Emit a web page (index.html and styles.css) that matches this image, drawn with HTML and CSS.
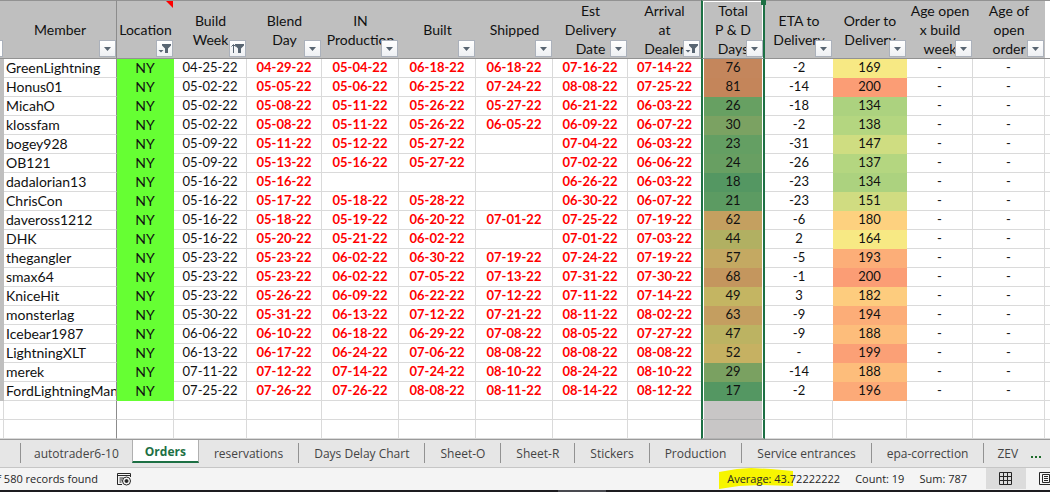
FILE: index.html
```html
<!DOCTYPE html>
<html lang="en">
<head>
<meta charset="utf-8">
<title>Orders</title>
<link rel="stylesheet" href="styles.css">
</head>
<body>
<svg class="defs" aria-hidden="true">
  <symbol id="drop" viewBox="0 0 15 15"><path d="M4 6h7L7.500 10z" fill="#586572"/></symbol>
  <symbol id="funnel" viewBox="0 0 15 15"><path d="M5 3h9v1.500l-3 3V12H8V7.500l-3-3z" fill="#586572"/><path d="M1.500 9h5L4 11.500z" fill="#586572"/></symbol>
  <symbol id="sorted" viewBox="0 0 15 15"><path d="M5 3h9v1.500l-3 3V12H8V7.500l-3-3z" fill="#586572"/><path d="M3.500 12V4M1.500 5.500l2-2 2 2" fill="none" stroke="#586572"/></symbol>
</svg>
<main class="sheet">
<table class="orders">
<colgroup><col class="c-edge"><col class="c-member"><col class="c-location"><col class="c-week"><col class="c-blend"><col class="c-stage"><col class="c-stage"><col class="c-stage"><col class="c-blend"><col class="c-arrival"><col class="c-total"><col class="c-eta"><col class="c-order"><col class="c-open"><col class="c-age"><col></colgroup>
<thead>
<tr>
<th><span class="cut-button"></span></th>
<th>Member<button class="filter" aria-label="Filter Member"><svg><use href="#drop"/></svg></button></th>
<th>Location<span class="note"></span><button class="filter" aria-label="Filter Location"><svg><use href="#funnel"/></svg></button></th>
<th>Build<br>Week<button class="filter" aria-label="Filter Build Week"><svg><use href="#sorted"/></svg></button></th>
<th>Blend<br>Day<button class="filter" aria-label="Filter Blend Day"><svg><use href="#drop"/></svg></button></th>
<th>IN<br>Production<button class="filter" aria-label="Filter IN Production"><svg><use href="#drop"/></svg></button></th>
<th>Built<button class="filter" aria-label="Filter Built"><svg><use href="#drop"/></svg></button></th>
<th>Shipped<button class="filter" aria-label="Filter Shipped"><svg><use href="#drop"/></svg></button></th>
<th>Est<br>Delivery<br>Date<button class="filter" aria-label="Filter Est Delivery Date"><svg><use href="#drop"/></svg></button></th>
<th>Arrival<br>at<br>Dealer<button class="filter" aria-label="Filter Arrival at Dealer"><svg><use href="#funnel"/></svg></button></th>
<th>Total<br>P &amp; D<br>Days<span class="handle"></span><button class="filter" aria-label="Filter Total P and D Days"><svg><use href="#drop"/></svg></button></th>
<th>ETA to<br>Delivery<button class="filter" aria-label="Filter ETA to Delivery"><svg><use href="#drop"/></svg></button></th>
<th>Order to<br>Delivery<button class="filter" aria-label="Filter Order to Delivery"><svg><use href="#drop"/></svg></button></th>
<th>Age open<br>x build<br>week<button class="filter" aria-label="Filter Age open x build week"><svg><use href="#drop"/></svg></button></th>
<th>Age of<br>open<br>order<button class="filter" aria-label="Filter Age of open order"><svg><use href="#drop"/></svg></button></th>
<th></th>
</tr>
</thead>
<tbody class="records">
<tr><td></td><td>GreenLightning</td><td>NY</td><td>04-25-22</td><td>04-29-22</td><td>05-04-22</td><td>06-18-22</td><td>06-18-22</td><td>07-16-22</td><td>07-14-22</td><td style="background:#c4865c">76</td><td>-2</td><td style="background:#f7e984">169</td><td>-</td><td>-</td><td></td></tr>
<tr><td></td><td>Honus01</td><td>NY</td><td>05-02-22</td><td>05-05-22</td><td>05-06-22</td><td>06-25-22</td><td>07-24-22</td><td>08-08-22</td><td>07-25-22</td><td style="background:#c4855a">81</td><td>-14</td><td style="background:#fb9d75">200</td><td>-</td><td>-</td><td></td></tr>
<tr><td></td><td>MicahO</td><td>NY</td><td>05-02-22</td><td>05-08-22</td><td>05-11-22</td><td>05-26-22</td><td>05-27-22</td><td>06-21-22</td><td>06-03-22</td><td style="background:#67a062">26</td><td>-18</td><td style="background:#acd27f">134</td><td>-</td><td>-</td><td></td></tr>
<tr><td></td><td>klossfam</td><td>NY</td><td>05-02-22</td><td>05-08-22</td><td>05-11-22</td><td>05-26-22</td><td>06-05-22</td><td>06-09-22</td><td>06-07-22</td><td style="background:#7ba262">30</td><td>-2</td><td style="background:#b4d680">138</td><td>-</td><td>-</td><td></td></tr>
<tr><td></td><td>bogey928</td><td>NY</td><td>05-09-22</td><td>05-11-22</td><td>05-12-22</td><td>05-27-22</td><td></td><td>07-04-22</td><td>06-03-22</td><td style="background:#649f63">23</td><td>-31</td><td style="background:#cfdd81">147</td><td>-</td><td>-</td><td></td></tr>
<tr><td></td><td>OB121</td><td>NY</td><td>05-09-22</td><td>05-13-22</td><td>05-16-22</td><td>05-27-22</td><td></td><td>07-02-22</td><td>06-06-22</td><td style="background:#689f62">24</td><td>-26</td><td style="background:#b4d680">137</td><td>-</td><td>-</td><td></td></tr>
<tr><td></td><td>dadalorian13</td><td>NY</td><td>05-16-22</td><td>05-16-22</td><td></td><td></td><td></td><td>06-26-22</td><td>06-03-22</td><td style="background:#549762">18</td><td>-23</td><td style="background:#acd27f">134</td><td>-</td><td>-</td><td></td></tr>
<tr><td></td><td>ChrisCon</td><td>NY</td><td>05-16-22</td><td>05-17-22</td><td>05-18-22</td><td>05-28-22</td><td></td><td>06-30-22</td><td>06-07-22</td><td style="background:#5c9b62">21</td><td>-23</td><td style="background:#d0dc81">151</td><td>-</td><td>-</td><td></td></tr>
<tr><td></td><td>daveross1212</td><td>NY</td><td>05-16-22</td><td>05-18-22</td><td>05-19-22</td><td>06-20-22</td><td>07-01-22</td><td>07-25-22</td><td>07-19-22</td><td style="background:#c4a060">62</td><td>-6</td><td style="background:#fdd17f">180</td><td>-</td><td>-</td><td></td></tr>
<tr><td></td><td>DHK</td><td>NY</td><td>05-16-22</td><td>05-20-22</td><td>05-21-22</td><td>06-02-22</td><td></td><td>07-01-22</td><td>07-03-22</td><td style="background:#b1b062">44</td><td>2</td><td style="background:#f7e984">164</td><td>-</td><td>-</td><td></td></tr>
<tr><td></td><td>thegangler</td><td>NY</td><td>05-23-22</td><td>05-23-22</td><td>06-02-22</td><td>06-30-22</td><td>07-19-22</td><td>07-24-22</td><td>07-19-22</td><td style="background:#c4a962">57</td><td>-5</td><td style="background:#fcae78">193</td><td>-</td><td>-</td><td></td></tr>
<tr><td></td><td>smax64</td><td>NY</td><td>05-23-22</td><td>05-23-22</td><td>06-02-22</td><td>07-05-22</td><td>07-13-22</td><td>07-31-22</td><td>07-30-22</td><td style="background:#c4965e">68</td><td>-1</td><td style="background:#fb9d75">200</td><td>-</td><td>-</td><td></td></tr>
<tr><td></td><td>KniceHit</td><td>NY</td><td>05-23-22</td><td>05-26-22</td><td>06-09-22</td><td>06-22-22</td><td>07-12-22</td><td>07-11-22</td><td>07-14-22</td><td style="background:#c4b562">49</td><td>3</td><td style="background:#fdcc7e">182</td><td>-</td><td>-</td><td></td></tr>
<tr><td></td><td>monsterlag</td><td>NY</td><td>05-30-22</td><td>05-31-22</td><td>06-13-22</td><td>07-12-22</td><td>07-21-22</td><td>08-11-22</td><td>08-02-22</td><td style="background:#c49e60">63</td><td>-9</td><td style="background:#fcad78">194</td><td>-</td><td>-</td><td></td></tr>
<tr><td></td><td>Icebear1987</td><td>NY</td><td>06-06-22</td><td>06-10-22</td><td>06-18-22</td><td>06-29-22</td><td>07-08-22</td><td>08-05-22</td><td>07-27-22</td><td style="background:#bcb362">47</td><td>-9</td><td style="background:#fdbd7b">188</td><td>-</td><td>-</td><td></td></tr>
<tr><td></td><td>LightningXLT</td><td>NY</td><td>06-13-22</td><td>06-17-22</td><td>06-24-22</td><td>07-06-22</td><td>08-08-22</td><td>08-08-22</td><td>08-08-22</td><td style="background:#c6b162">52</td><td>-</td><td style="background:#fba076">199</td><td>-</td><td>-</td><td></td></tr>
<tr><td></td><td>merek</td><td>NY</td><td>07-11-22</td><td>07-12-22</td><td>07-14-22</td><td>07-24-22</td><td>08-10-22</td><td>08-24-22</td><td>08-10-22</td><td style="background:#7aa161">29</td><td>-14</td><td style="background:#fdbd7b">188</td><td>-</td><td>-</td><td></td></tr>
<tr><td></td><td>FordLightningMan</td><td>NY</td><td>07-25-22</td><td>07-26-22</td><td>07-26-22</td><td>08-08-22</td><td>08-11-22</td><td>08-14-22</td><td>08-12-22</td><td style="background:#549762">17</td><td>-2</td><td style="background:#fcaa78">196</td><td>-</td><td>-</td><td></td></tr>
</tbody>
<tbody class="blank">
<tr><td></td><td></td><td></td><td></td><td></td><td></td><td></td><td></td><td></td><td></td><td></td><td></td><td></td><td></td><td></td><td></td></tr>
<tr><td></td><td></td><td></td><td></td><td></td><td></td><td></td><td></td><td></td><td></td><td></td><td></td><td></td><td></td><td></td><td></td></tr>
</tbody>
</table>
</main>
<nav class="tabs" aria-label="Sheets">
<span class="lead"></span>
<button class="tab before-active">autotrader6-10</button>
<button class="tab active">Orders</button>
<button class="tab">reservations</button>
<button class="tab">Days Delay Chart</button>
<button class="tab">Sheet-O</button>
<button class="tab">Sheet-R</button>
<button class="tab">Stickers</button>
<button class="tab">Production</button>
<button class="tab">Service entrances</button>
<button class="tab">epa-correction</button>
<button class="tab last">ZEV</button>
<button class="more" aria-label="More sheets"><i></i><i></i><i></i></button>
</nav>
<footer class="status">
<span class="found">of 580 records found</span>
<button class="macro" aria-label="Record macro"><svg width="15" height="14" viewBox="0 0 15 14" fill="none" stroke="#262626"><path d="M5 12.500H.5V1.500h13V5M.5 3.500h13M2.500 6h4M2.500 8h2.500M2.500 10h2"/><circle cx="9.500" cy="9" r="4"/><circle cx="9.500" cy="9" r="1.500" fill="#262626"/></svg></button>
<span class="average"><svg class="marker" viewBox="0 0 74 22" preserveAspectRatio="none"><path d="M0 5L18 2 32 1 52 2 74 4V19L42 18 20 19 0 22z" fill="#f7f500"/></svg><span class="value">Average: 43.72222222</span></span>
<span class="count">Count: 19</span>
<span class="sum">Sum: 787</span>
<button class="view current" aria-label="Normal view"><svg width="14" height="14" viewBox="0 0 14 14" fill="none" stroke="#262626"><path d="M.5.5h12v12H.5zM4.500.5v12M8.500.5v12M.5 4.500h12M.5 8.500h12"/></svg></button>
<button class="view layout" aria-label="Page layout view"><svg width="14" height="14" viewBox="0 0 14 14" fill="none" stroke="#262626"><path d="M.5.5h13v12H.5zM3.500 2.500h7v8h-7zM5 4.500h4M5 6.500h4M5 8.500h4"/></svg></button>
</footer>
<div class="taskbar"><span class="task"></span></div>
</body>
</html>
```
FILE: styles.css
```css
* { box-sizing: border-box; }
body { margin: 0; overflow: hidden; background: #fff; color: #111; font-family: Lato, "Liberation Sans", sans-serif; font-size: 13px; }
button { margin: 0; padding: 0; border: 0; background: none; color: inherit; font: inherit; }
svg { display: block; }
.defs { position: absolute; width: 0; height: 0; }

.sheet { overflow: hidden; border-bottom: 1px solid #9a9a9a; }
.orders { width: 100%; table-layout: fixed; border-collapse: separate; border-spacing: 0; line-height: 17px; }
.c-edge { width: 4px; }
.c-member { width: 113px; }
.c-location { width: 57px; }
.c-week { width: 73px; }
.c-blend { width: 75px; }
.c-stage { width: 77px; }
.c-arrival { width: 73px; }
.c-total { width: 64px; }
.c-eta { width: 68px; }
.c-order { width: 74px; }
.c-open { width: 66px; }
.c-age { width: 72px; }

.orders th { position: relative; height: 59px; padding: 0; background: #bfbfbf; border-top: 1px solid #929292; border-bottom: 1px solid #929292; font-weight: 400; font-size: 14px; line-height: 19px; white-space: nowrap; }
.orders th:last-child { background: #fff; }
.orders th:nth-child(2) { border-right: 1px solid #8c8c8c; }
.filter { position: absolute; right: 1px; bottom: 1px; width: 17px; height: 17px; background: linear-gradient(#fff, #eef0f3); border: 1px solid #abb1bb; }
.orders th:nth-child(2) .filter, .orders th:nth-child(11) .filter { right: 0; }
.filter svg { width: 15px; height: 15px; }
.cut-button { position: absolute; left: 0; bottom: 1px; width: 3px; height: 17px; background: #fff; border: 1px solid #abb1bb; border-left: 0; }
.note { position: absolute; top: 0; right: 1px; border-top: 7px solid #f00; border-left: 7px solid transparent; }
.handle { position: absolute; z-index: 1; top: -1px; right: -3px; width: 5px; height: 5px; background: #1d7044; }

.orders td { height: 19px; padding: 0; border-right: 1px solid #dadada; border-bottom: 1px solid #dadada; text-align: center; vertical-align: top; white-space: nowrap; overflow: hidden; }
.orders td:nth-child(2) { padding-left: 2px; border-right-color: #8c8c8c; text-align: left; font-size: 14px; }
.records td:nth-child(1) { background: #bfbfbf; border-color: #bfbfbf; }
.records td:nth-child(3) { background: #66ff33; border-color: #66ff33; font-size: 14px; }
.records td:nth-child(n+5):nth-child(-n+10) { color: #f00; font-weight: 700; }
.records td:nth-child(13) { border-color: transparent; }
.orders td:nth-child(10), .orders td:nth-child(12) { border-right-width: 0; }
.orders td:nth-child(16) { border-right: 0; }
.orders th:nth-child(11), .orders td:nth-child(11) { border-left: 2px solid #1d7044; border-right: 2px solid #1d7044; box-shadow: inset 1px 0 #fff, inset -1px 0 #fff; }
.orders th:nth-child(11) { box-shadow: inset 1px 1px #fff, inset -1px 0 #fff; }
.records td:nth-child(11) { border-bottom: 0; }
.blank td:nth-child(11) { background: #c8c6c6; border-bottom-color: #b4b4b4; }
.blank td:nth-child(12) { border-right-width: 1px; }

.tabs { display: flex; height: 28px; background: #e6e6e6; border-bottom: 1px solid #c6c6c6; font-family: "Open Sans", "Noto Sans", sans-serif; font-size: 12px; color: #444; white-space: nowrap; overflow: hidden; }
.lead { flex: none; width: 21px; margin: 3px 0 4px; border-right: 1px solid #929292; }
.tab { flex: none; margin: 3px 0 4px; padding: 0 15px; border-right: 1px solid #929292; }
.tab.before-active, .tab.last { padding: 0 13px; border-right: 0; }
.tab.active { margin: 0 0 4px; padding: 2px 12px 0; background: #fff; border: 1px solid #b0b0b0; border-top: 0; border-bottom: 2px solid #1d7044; color: #1d7044; font-weight: 700; }
.more { display: flex; gap: 2px; align-items: flex-end; padding-bottom: 9px; }
.more i { width: 2px; height: 2px; background: #1d6b2a; }

.status { display: flex; align-items: center; height: 22px; padding-bottom: 1px; background: #f4f4f4; font-family: "Open Sans", "Noto Sans", sans-serif; font-size: 11px; color: #262626; white-space: nowrap; }
.found { display: flex; flex: none; justify-content: flex-end; width: 98px; overflow: hidden; }
.macro { margin-left: 19px; }
.average { position: relative; margin-left: auto; }
.marker { position: absolute; left: -8px; top: -4px; width: 74px; height: 22px; }
.value { position: relative; }
.count, .sum { margin-left: 15px; }
.view { display: flex; align-items: center; justify-content: center; flex: none; height: 21px; }
.view.current { width: 40px; margin-left: 19px; background: #dcdcdc; }
.view.layout { width: 24px; justify-content: flex-end; overflow: hidden; }
.view.layout svg { flex: none; margin-right: -3px; }
.taskbar { display: flex; justify-content: center; height: 3px; background: #1d1c20; }
.task { width: 48px; margin-left: 114px; background: #494a50; }
```
